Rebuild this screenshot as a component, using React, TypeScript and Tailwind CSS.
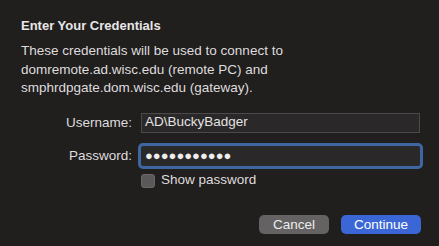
export default function App() {
  return (
    <div
      className="w-[439px] h-[246px] bg-[#211e1e] text-[#e4e2e2] overflow-hidden flex flex-col"
      style={{ fontFamily: '"Liberation Sans", Arial, sans-serif' }}
    >
      <div className="pl-[21px] pr-[18px] pt-[18px]">
        <h1 className="text-[13px] font-bold leading-[16px] text-[#e8e6e6]">Enter Your Credentials</h1>
        <p className="mt-[8px] text-[13.5px] leading-[18.5px] text-[#dedcdc]">
          These credentials will be used to connect to
          <br />
          domremote.ad.wisc.edu (remote PC) and
          <br />
          smphrdpgate.dom.wisc.edu (gateway).
        </p>
      </div>

      <div className="mt-[15px] grid grid-cols-[111px_279px] gap-x-[9px] items-center pl-[21px]">
        <label className="text-right text-[13.5px] leading-[20px] text-[#dedcdc]">Username:</label>
        <div className="h-[20px] bg-[#2a2828] border border-[#4b4949] flex items-center px-[3px] text-[13.5px] text-[#e4e2e2]">
          AD\BuckyBadger
        </div>

        <label className="mt-[13px] text-right text-[13.5px] leading-[20px] text-[#dedcdc]">Password:</label>
        <div className="mt-[13px] h-[20px] bg-[#2a2828] flex items-center px-[4px] ring-[3px] ring-[#3e66a0] rounded-[2px] text-[13px] text-[#eeeeee]">
          ●●●●●●●●●●●
        </div>

        <div />
        <div className="mt-[5px] h-[20px] flex items-center gap-[6px]">
          <span className="w-[14px] h-[14px] rounded-[3px] bg-[#5a5858] border border-[#6a6868]" />
          <span className="text-[13.5px] text-[#dedcdc]">Show password</span>
        </div>
      </div>

      <div className="mt-auto mb-[12px] flex justify-end gap-[12px] pr-[18px]">
        <button className="w-[70px] h-[19px] rounded-[5px] bg-[#646262] text-[13.5px] text-[#ececec] leading-none">
          Cancel
        </button>
        <button className="w-[80px] h-[19px] rounded-[5px] bg-[#3b67d6] text-[13.5px] text-white leading-none">
          Continue
        </button>
      </div>
    </div>
  );
}
